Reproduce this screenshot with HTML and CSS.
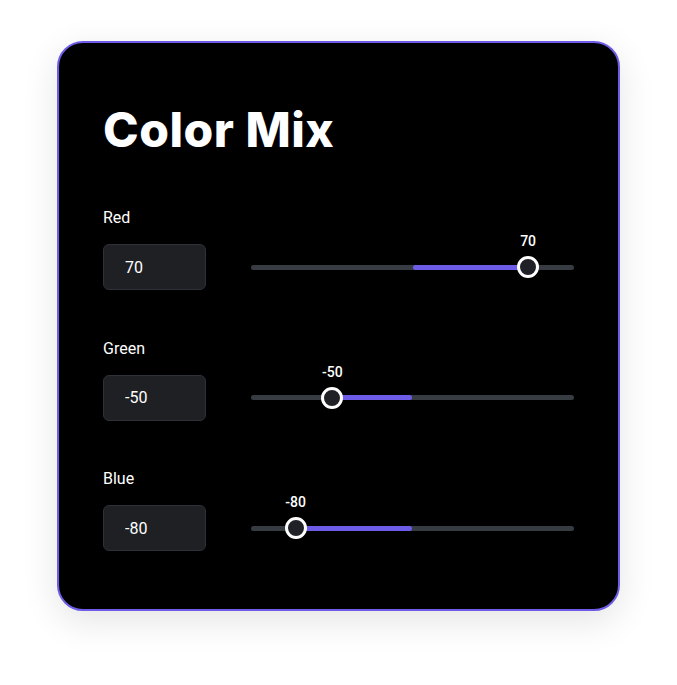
FILE: index.html
```html
<!DOCTYPE html>
<html lang="en">
<head>
  <meta charset="UTF-8" />
  <meta name="viewport" content="width=device-width, initial-scale=1.0"/>
  <title>Color Mix</title>
  <link rel="stylesheet" href="styles.css">
</head>
<body>

  <div class="card">
    <h1>Color Mix</h1>

    <div class="field">
      <label for="red">Red</label>
      <div class="control">
        <input type="text" id="red" class="num" value="70">
        <div class="slider">
          <div class="track"></div>
          <div class="fill" style="left: 50%; width: 35.8%;"></div>
          <div class="thumb" style="left: 85.8%;"><span class="tip">70</span></div>
        </div>
      </div>
    </div>

    <div class="field">
      <label for="green">Green</label>
      <div class="control">
        <input type="text" id="green" class="num" value="-50">
        <div class="slider">
          <div class="track"></div>
          <div class="fill" style="left: 25.2%; width: 24.8%;"></div>
          <div class="thumb" style="left: 25.2%;"><span class="tip">-50</span></div>
        </div>
      </div>
    </div>

    <div class="field">
      <label for="blue">Blue</label>
      <div class="control">
        <input type="text" id="blue" class="num" value="-80">
        <div class="slider">
          <div class="track"></div>
          <div class="fill" style="left: 13.8%; width: 36.2%;"></div>
          <div class="thumb" style="left: 13.8%;"><span class="tip">-80</span></div>
        </div>
      </div>
    </div>
  </div>

</body>
</html>
```

FILE: styles.css
```css
:root {
  --accent: #6c5ce7;
  --track: #373c43;
  --box: #1f2024;
}

html {
  background-color: #ffffff;
}

body {
  margin: 0;
  padding: 41px 0 74px 57px;
  font-family: Roboto, "Liberation Sans", sans-serif;
}

.card {
  box-sizing: border-box;
  width: 563px;
  height: 570px;
  background-color: #000;
  border: 2px solid var(--accent);
  border-radius: 26px;
  padding: 63px 44px 0 44px;
  box-shadow: 0 10px 36px rgba(0, 0, 0, 0.11);
  color: #fff;
}

h1 {
  margin: 0 0 54px 0;
  font-family: Inter, "Liberation Sans", sans-serif;
  font-weight: 800;
  font-size: 48px;
  line-height: 48px;
  letter-spacing: 0.5px;
}

.field {
  margin-bottom: 48.5px;
}

label {
  display: block;
  font-size: 16px;
  line-height: 20px;
  margin-bottom: 16px;
}

.control {
  display: flex;
  align-items: center;
  gap: 45px;
}

.num {
  box-sizing: border-box;
  width: 103px;
  height: 46px;
  padding: 0 0 0 21px;
  background-color: var(--box);
  border: 1px solid #2e3138;
  border-radius: 6px;
  color: #fff;
  font-family: Roboto, "Liberation Sans", sans-serif;
  font-size: 16px;
  outline: none;
}

.slider {
  position: relative;
  width: 325px;
  height: 5px;
}

.track {
  height: 5px;
  border-radius: 3px;
  background-color: var(--track);
}

.fill {
  position: absolute;
  top: 0;
  height: 5px;
  border-radius: 3px;
  background-color: var(--accent);
}

.thumb {
  position: absolute;
  top: 50%;
  box-sizing: border-box;
  width: 22px;
  height: 22px;
  margin: -11px 0 0 -11px;
  border: 3.5px solid #fff;
  border-radius: 50%;
  background-color: #1f2126;
}

.tip {
  position: absolute;
  left: 50%;
  bottom: 26px;
  transform: translateX(-50%);
  font-size: 14px;
  font-weight: 500;
  line-height: 16px;
  color: #fff;
}
```
